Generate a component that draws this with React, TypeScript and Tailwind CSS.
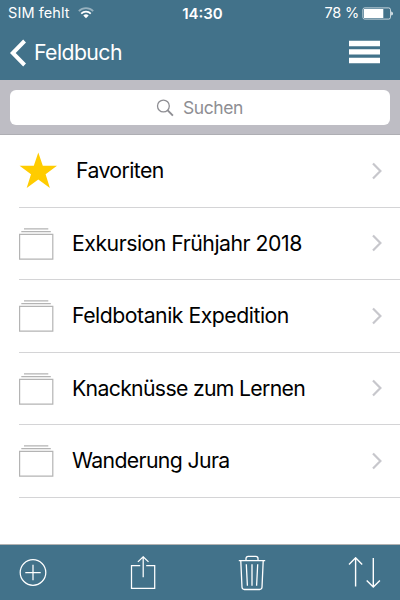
const folders = [
  { name: "Exkursion Frühjahr 2018", tracking: "tracking-[-0.49px]" },
  { name: "Feldbotanik Expedition", tracking: "tracking-[-0.49px]" },
  { name: "Knacknüsse zum Lernen", tracking: "tracking-[-0.69px]" },
  { name: "Wanderung Jura", tracking: "tracking-[-0.64px]" },
];

function Chevron() {
  return (
    <svg width="10" height="18" viewBox="0 0 10 18" fill="none" stroke="#c7c7cc" strokeWidth="2.2">
      <path d="M1 1.5 8.4 9 1 16.5" />
    </svg>
  );
}

function FolderIcon() {
  return (
    <svg width="35" height="33" viewBox="0 0 35 33" fill="none" stroke="#b4b4b4" strokeWidth="1.2">
      <path d="M5 1.9h24.3M2.3 4.6h29.5" />
      <path d="M.6 7.3h33.2v24.8H.6z" />
    </svg>
  );
}

function StatusBar() {
  return (
    <div className="grid h-[25px] grid-cols-3 items-center pl-2 pr-[6px] pt-px text-[14.5px] leading-none">
      <div className="flex items-center gap-[8px]">
        <span className="whitespace-nowrap tracking-[0.1px]">SIM fehlt</span>
        <svg width="16" height="12" viewBox="0 0 16 12" fill="none" stroke="white" strokeWidth="1.7">
          <path d="M.8 4.2a10.2 10.2 0 0 1 14.4 0" opacity=".45" />
          <path d="M3.2 6.7a6.8 6.8 0 0 1 9.6 0" />
          <path d="M8 11.2 5.3 8.6a3.8 3.8 0 0 1 5.4 0z" fill="white" stroke="none" />
        </svg>
      </div>
      <span className="pl-[3px] text-center text-[15px] font-semibold">14:30</span>
      <div className="flex items-center justify-end gap-[3px]">
        <span className="whitespace-nowrap tracking-[-0.2px]">78 %</span>
        <svg width="32" height="13" viewBox="0 0 32 13" fill="none">
          <rect x=".9" y=".9" width="27.6" height="11.2" rx="1.8" stroke="white" strokeOpacity=".7" />
          <path d="M2 2h19.3v9H2z" fill="white" />
          <path d="M29.3 4.4c2 .6 2 3.6 0 4.2z" fill="white" />
        </svg>
      </div>
    </div>
  );
}

export default function App() {
  return (
    <div className="flex h-[600px] w-[400px] flex-col overflow-hidden bg-white font-['Inter',sans-serif] text-black">
      <header className="h-20 bg-[#42728a] text-white">
        <StatusBar />
        <div className="flex h-[55px] items-center justify-between pl-[10px] pr-5">
          <div className="flex items-center gap-2">
            <svg width="16" height="28" viewBox="0 0 16 28" fill="none" stroke="white" strokeWidth="4">
              <path d="M14.6 2 2.8 14l11.8 12" />
            </svg>
            <span className="text-[21.25px] leading-none tracking-[-0.58px]">Feldbuch</span>
          </div>
          <svg className="mb-px" width="31" height="24" viewBox="0 0 31 24" fill="white">
            <path d="M0 .8h31v5.4H0zM0 9.3h31v5.2H0zM0 17.8h31v5.4H0z" />
          </svg>
        </div>
      </header>

      <div className="h-[55px] border-b border-[#aeaeb3] bg-[#bebdc4] px-[10px] pt-[10px]">
        <div className="flex h-[35px] items-center justify-center gap-[9px] rounded-[6px] bg-white pr-px text-[#8e8e93]">
          <svg width="18" height="18" viewBox="0 0 18 18" fill="none" stroke="currentColor">
            <circle cx="7.4" cy="7" r="5.9" strokeWidth="1.3" />
            <path d="m11.7 11.3 5.2 5.3" strokeWidth="1.9" />
          </svg>
          <span className="text-[17.5px] leading-none tracking-[-0.4px]">Suchen</span>
        </div>
      </div>

      <main className="flex-1 pl-[19px] text-[21.25px] leading-none">
        <div className="flex h-[72.5px] items-center border-b border-[#d4d4d6] pr-[18px]">
          <svg width="39" height="37" viewBox="0 0 39 37" fill="#ffcc00">
            <path d="M19.3.5 23.8 13.8H38L26.6 22.2 30.9 36 19.3 27.5 7.7 36 12 22.2.6 13.8h14.2z" />
          </svg>
          <span className="ml-[18px] flex-1 tracking-[-0.6px]">Favoriten</span>
          <Chevron />
        </div>
        {folders.map(({ name, tracking }) => (
          <div key={name} className="flex h-[72.5px] items-center border-b border-[#d4d4d6] pr-[18px]">
            <FolderIcon />
            <span className={`ml-[18px] flex-1 whitespace-nowrap ${tracking}`}>{name}</span>
            <Chevron />
          </div>
        ))}
      </main>

      <footer className="flex h-14 items-center justify-between border-t border-[#b2b2b2] bg-[#42728a] px-[19px]">
        <svg width="28" height="28" viewBox="0 0 28 28" fill="none" stroke="white" strokeWidth="1.25">
          <circle cx="14" cy="13.5" r="12.8" />
          <path d="M14 5.8v15.4M6.3 13.5h15.4" />
        </svg>
        <svg className="ml-px" width="26" height="34" viewBox="0 0 26 34" fill="none" stroke="white" strokeWidth="1.25">
          <path d="M10.2 9.7H1.5v22.6h23.2V9.7h-8.5" />
          <path d="M13.2 21.3V.9M7.9 5.9 13.2.8l5.3 5.1" />
        </svg>
        <svg width="28" height="36" viewBox="0 0 28 36" fill="none" stroke="white" strokeWidth="1.3">
          <path d="M.8 5.6h26.4M8 5.4V3.6Q8 1.4 10.2 1.4h7.6Q20 1.4 20 3.6v1.8" />
          <path d="M2.8 6 4 32.300q.2 2.200 2.400 2.200h15.200q2.200 0 2.400-2.200L25.200 6" />
          <path d="m8.300 9.300 1.100 21.400M14 9.300v21.400M19.700 9.300l-1.100 21.400" />
        </svg>
        <svg width="33" height="32" viewBox="0 0 33 32" fill="none" stroke="white" strokeWidth="1.4">
          <path d="M7.600 29.500V.9M1 7.400l6.600-6.600 6.600 6.600" />
          <path d="M25.300.9v29M18.700 23.400l6.600 6.600 6.600-6.600" />
        </svg>
      </footer>
    </div>
  );
}
